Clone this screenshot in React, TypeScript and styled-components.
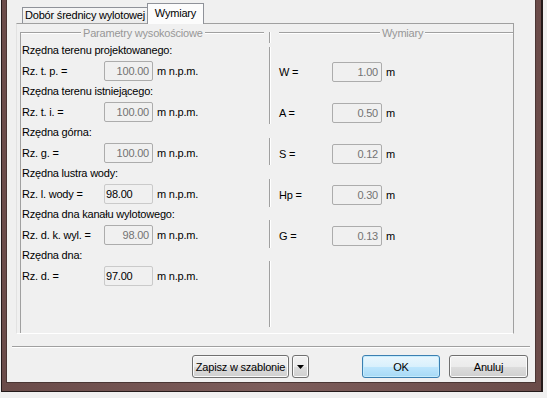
import React from 'react';
import styled, { createGlobalStyle } from 'styled-components';

const GlobalStyle = createGlobalStyle`
  html, body {
    margin: 0;
    padding: 0;
    background: #f0f0f0;
  }
  body {
    font-family: 'Liberation Sans', Arial, sans-serif;
    font-size: 11px;
    letter-spacing: -0.2px;
    color: #000000;
  }
`;

const GRAY = '#a0a0a0';

// window border (Win7 basic, brown tint)
const Frame = styled.div`
  box-sizing: border-box;
  width: 542px;
  height: 392px;
  margin-left: 1px;
  padding: 0 5px 8px 4px;
  border: 1px solid #241a1a;
  border-top: none;
  border-right-width: 2px;
  background: linear-gradient(90deg, #6a4b49, #7d5d5b 50%, #6a4b49);
`;

const Client = styled.div`
  box-sizing: border-box;
  width: 530px;
  height: 383px;
  border: 1px solid #4a3634;
  border-top: none;
  background: #f0f0f0;
  display: flex;
  flex-direction: column;
`;

const TabStrip = styled.div`
  height: 23px;
  display: flex;
  align-items: flex-end;
  padding-left: 15px;
`;

const Tab = styled.div<{ $active?: boolean }>`
  box-sizing: border-box;
  position: relative;
  width: ${p => (p.$active ? 57 : 125)}px;
  height: ${p => (p.$active ? 21 : 16)}px;
  margin-bottom: ${p => (p.$active ? -1 : 0)}px;
  z-index: ${p => (p.$active ? 1 : 0)};
  border: 1px solid #8f9299;
  border-bottom: none;
  ${p => (p.$active ? '' : 'border-right: none;')}
  background: ${p =>
    p.$active ? '#fcfcfc' : 'linear-gradient(#f6f6f6, #ebebeb)'};
  line-height: ${p => (p.$active ? 18 : 15)}px;
  text-align: center;
  white-space: nowrap;
`;

const Panel = styled.div`
  box-sizing: border-box;
  width: 498px;
  height: 311px;
  margin-left: 9px;
  border: 1px solid ${GRAY};
  border-left-color: #e2e2e2;
  border-bottom-color: #ffffff;
  display: flex;
  padding: 8px 0 0 3px;
`;

const Group = styled.div<{ $left?: boolean }>`
  box-sizing: border-box;
  display: flex;
  flex-direction: column;
  ${p => (p.$left ? `width: 244px; border-left: 1px solid ${GRAY};` : 'flex: 1;')}
`;

const GroupHeader = styled.div<{ $indent?: number }>`
  display: flex;
  align-items: center;
  height: 2px;
  padding-left: ${p => p.$indent ?? 0}px;
`;

const Rule = styled.div<{ $width?: number }>`
  box-sizing: border-box;
  height: 2px;
  border-top: 1px solid ${GRAY};
  border-bottom: 1px solid #ffffff;
  ${p => (p.$width ? `width: ${p.$width}px; flex: none;` : 'flex: 1;')}
`;

const Legend = styled.span`
  line-height: 13px;
  margin: -6px 0;
  padding: 0 2px;
  color: #979797;
  white-space: nowrap;
`;

const gaps: [number, number][] = [
  [0, 11], [15, 92], [106, 133], [147, 175], [188, 216], [229, 295],
];
const stripes = (color: string) =>
  'linear-gradient(to bottom, ' +
  gaps
    .map(([a, b], i) => {
      const prev = i === 0 ? 0 : gaps[i - 1][1];
      return `transparent ${prev}px ${a}px, ${color} ${a}px ${b}px`;
    })
    .join(', ') +
  ', transparent 295px)';

const Divider = styled.div`
  flex: none;
  width: 2px;
  height: 295px;
  margin-left: 5px;
  background:
    ${stripes(GRAY)} left top / 1px 100% no-repeat,
    ${stripes('#ffffff')} right top / 1px 100% no-repeat;
`;

const LeftBody = styled.div`
  display: flex;
  flex-direction: column;
  padding: 6px 0 0 1px;
`;

const RightBody = styled.div`
  display: flex;
  flex-direction: column;
  padding: 17px 0 0 8px;
`;

const Caption = styled.div`
  height: 20px;
  line-height: 20px;
  white-space: nowrap;
`;

const Row = styled.div<{ $tall?: boolean }>`
  display: flex;
  align-items: center;
  height: ${p => (p.$tall ? 41 : 21)}px;
`;

const Label = styled.div<{ $width: number }>`
  width: ${p => p.$width}px;
  flex: none;
  white-space: nowrap;
`;

const Field = styled.div<{ $enabled?: boolean; $width: number }>`
  box-sizing: border-box;
  width: ${p => p.$width}px;
  height: 20px;
  flex: none;
  border: 1px solid ${p => (p.$enabled ? '#cacaca' : '#acacac')};
  border-radius: 2px;
  background: #f0f0f0;
  line-height: 18px;
  padding: ${p => (p.$enabled ? '0 0 0 1px' : '0 3px 0 0')};
  text-align: ${p => (p.$enabled ? 'left' : 'right')};
  color: ${p => (p.$enabled ? '#000000' : '#737373')};
`;

const Unit = styled.span`
  margin-left: 4px;
  white-space: nowrap;
`;

const Separator = styled.div`
  margin: 12px 5px 0;
  height: 0;
  border-top: 1px solid ${GRAY};
  border-bottom: 1px solid #ffffff;
`;

const ButtonBar = styled.div`
  display: flex;
  justify-content: flex-end;
  margin-top: 7px;
  padding-right: 7px;
`;

const Button = styled.button<{ $width: number; $focused?: boolean; $gap?: number }>`
  box-sizing: border-box;
  width: ${p => p.$width}px;
  height: 23px;
  margin: 0 0 0 ${p => p.$gap ?? 0}px;
  padding: 0;
  font: inherit;
  letter-spacing: inherit;
  color: #000000;
  border-radius: 3px;
  display: flex;
  align-items: center;
  justify-content: center;
  border: 1px solid ${p => (p.$focused ? '#3c7fb1' : '#707070')};
  background: ${p =>
    p.$focused
      ? 'linear-gradient(#eaf6fd 0%, #d9f0fc 50%, #bee6fd 51%, #a7d9f5 100%)'
      : 'linear-gradient(#f2f2f2 0%, #ebebeb 50%, #dddddd 51%, #cfcfcf 100%)'};
  box-shadow: inset 0 0 0 1px ${p => (p.$focused ? '#c5ecfd' : '#fbfbfb')};
`;

const heights = [
  { caption: 'Rzędna terenu projektowanego:', label: 'Rz. t. p. =', value: '100.00' },
  { caption: 'Rzędna terenu istniejącego:', label: 'Rz. t. i. =', value: '100.00' },
  { caption: 'Rzędna górna:', label: 'Rz. g. =', value: '100.00' },
  { caption: 'Rzędna lustra wody:', label: 'Rz. l. wody =', value: '98.00', enabled: true },
  { caption: 'Rzędna dna kanału wylotowego:', label: 'Rz. d. k. wyl. =', value: '98.00' },
  { caption: 'Rzędna dna:', label: 'Rz. d. =', value: '97.00', enabled: true },
];

const dims = [
  { label: 'W =', value: '1.00' },
  { label: 'A =', value: '0.50' },
  { label: 'S =', value: '0.12' },
  { label: 'Hp =', value: '0.30' },
  { label: 'G =', value: '0.13' },
];

const App: React.FC = () => {
  return (
    <>
      <GlobalStyle />
      <Frame>
        <Client>
          <TabStrip>
            <Tab>Dobór średnicy wylotowej</Tab>
            <Tab $active>Wymiary</Tab>
          </TabStrip>

          <Panel>
            <Group $left>
              <GroupHeader>
                <Rule $width={60} />
                <Legend>Parametry wysokościowe</Legend>
                <Rule />
              </GroupHeader>
              <LeftBody>
                {heights.map(h => (
                  <React.Fragment key={h.label}>
                    <Caption>{h.caption}</Caption>
                    <Row>
                      <Label $width={82}>{h.label}</Label>
                      <Field $width={49} $enabled={h.enabled}>{h.value}</Field>
                      <Unit>m n.p.m.</Unit>
                    </Row>
                  </React.Fragment>
                ))}
              </LeftBody>
            </Group>

            <Divider />

            <Group>
              <GroupHeader $indent={8}>
                <Rule $width={101} />
                <Legend>Wymiary</Legend>
                <Rule />
              </GroupHeader>
              <RightBody>
                {dims.map(d => (
                  <Row $tall key={d.label}>
                    <Label $width={53}>{d.label}</Label>
                    <Field $width={50}>{d.value}</Field>
                    <Unit>m</Unit>
                  </Row>
                ))}
              </RightBody>
            </Group>
          </Panel>

          <Separator />

          <ButtonBar>
            <Button $width={97}>Zapisz w szablonie</Button>
            <Button $width={17} $gap={3}>
              <svg width="7" height="4" viewBox="0 0 7 4">
                <polygon points="0,0 7,0 3.5,4" fill="#000" />
              </svg>
            </Button>
            <Button $width={78} $gap={53} $focused>OK</Button>
            <Button $width={79} $gap={9}>Anuluj</Button>
          </ButtonBar>
        </Client>
      </Frame>
    </>
  );
};

export default App;
